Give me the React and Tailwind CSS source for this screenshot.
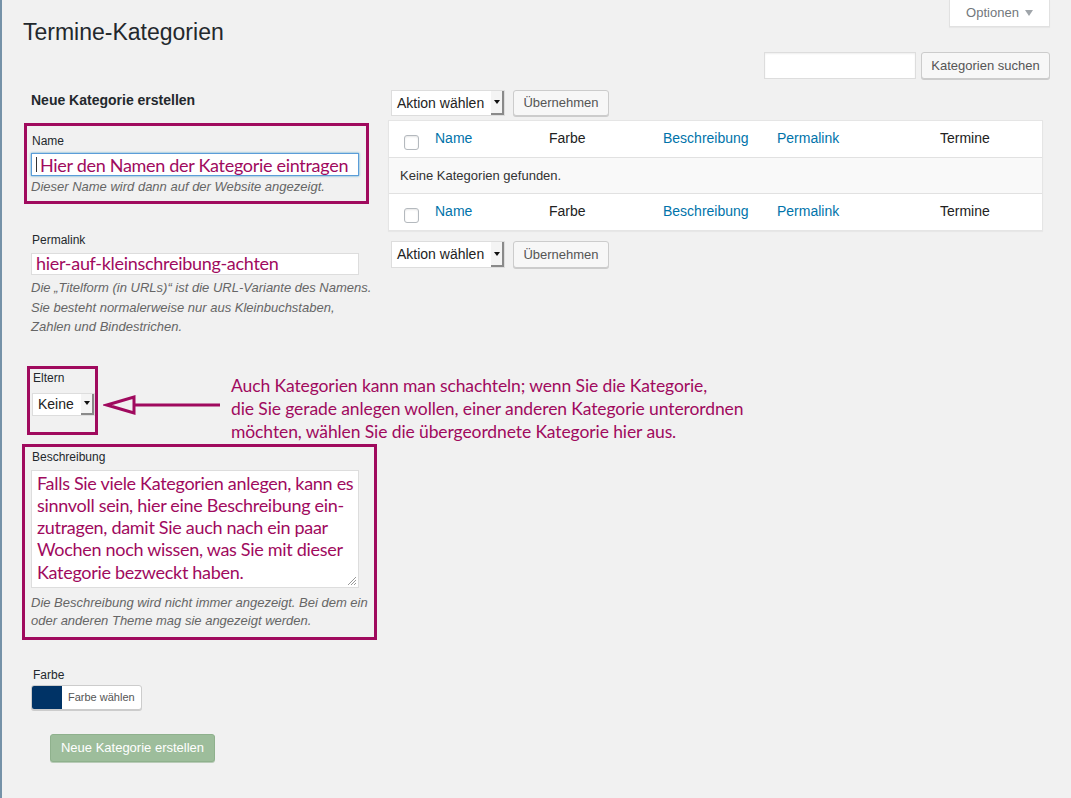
import React from "react";

const anno = { fontFamily: '"Lato", "Open Sans", sans-serif' };
const annoTight = { fontFamily: '"Lato", "Open Sans", sans-serif', letterSpacing: "-0.3px" };

function Select({ label, w, textClass = "" }) {
  return (
    <div className={`flex h-full bg-white border border-[#ddd] ${w}`}>
      <div className={`flex-1 flex items-center pl-[5px] text-[14px] text-[#222] ${textClass}`}>{label}</div>
      <div className="w-[13px] flex items-center justify-center border-r-2 border-b-2 border-[#8a8a8a] bg-[#f4f4f4]">
        <svg width="6" height="4" viewBox="0 0 6 4"><path d="M0 0 L6 0 L3 4 Z" fill="#111" /></svg>
      </div>
    </div>
  );
}

function Btn({ children, w }) {
  return (
    <div className={`h-full ${w} flex items-center justify-center bg-[#f7f7f7] border border-[#cccccc] rounded-[3px] shadow-[0_1px_0_#cccccc] text-[13px] text-[#555]`}>
      {children}
    </div>
  );
}

function Check() {
  return <div className="w-[15px] h-[15px] bg-white border border-[#b4b9be] rounded-[3px] shadow-[inset_0_1px_2px_rgba(0,0,0,0.1)]" />;
}

function HeadRow() {
  return (
    <div className="grid grid-cols-[46px_114px_114px_114px_163px_1fr] h-[36px] items-center text-[14px]">
      <div className="pl-[15px] pt-[6px]"><Check /></div>
      <div className="text-[#0073aa] -mt-[2px]">Name</div>
      <div className="text-[#222] -mt-[2px]">Farbe</div>
      <div className="text-[#0073aa] -mt-[2px]">Beschreibung</div>
      <div className="text-[#0073aa] -mt-[2px]">Permalink</div>
      <div className="text-[#222] -mt-[2px]">Termine</div>
    </div>
  );
}

export default function App() {
  return (
    <div
      className="relative w-[1071px] min-h-[798px] bg-[#f1f1f1] border-l-2 border-[#7592a8]"
      style={{ fontFamily: '"Liberation Sans", Arial, sans-serif' }}
    >
      {/* Optionen tab */}
      <div className="absolute right-[21px] top-0 w-[101px] h-[27px] bg-white border border-t-0 border-[#e1e1e1] shadow-[0_1px_1px_rgba(0,0,0,0.04)] flex items-center justify-center gap-[6px] text-[13px] text-[#72777c]">
        <span>Optionen</span>
        <svg width="8" height="6" viewBox="0 0 8 6"><path d="M0 0 L8 0 L4 6 Z" fill="#a0a5aa" /></svg>
      </div>

      <div className="pl-[21px] pt-[18px] h-[46px] text-[23px] leading-[29px] text-[#23282d]">Termine-Kategorien</div>

      <div className="flex justify-end gap-[5px] pr-[21px] mt-[6px] h-[27px]">
        <div className="w-[152px] h-full bg-white border border-[#ddd] shadow-[inset_0_1px_2px_rgba(0,0,0,0.07)]" />
        <Btn w="w-[129px]">Kategorien suchen</Btn>
      </div>

      <div className="flex pl-[20px]">
        {/* Left column */}
        <div className="w-[356px] flex flex-col shrink-0">
          <div className="mt-[11px] ml-[9px] h-[20px] leading-[20px] text-[14px] font-bold text-[#23282d]">Neue Kategorie erstellen</div>

          {/* Name box */}
          <div className="mt-[13px] ml-[2px] w-[345px] h-[81px] border-[3px] border-[#a00a5e] flex flex-col">
            <div className="mt-[7px] ml-[5px] h-[16px] leading-[16px] text-[12px] text-[#23282d]">Name</div>
            <div className="mt-[4px] ml-[4px] w-[328px] h-[23px] bg-white border border-[#5b9dd9] shadow-[0_0_2px_rgba(30,140,190,0.8)] flex items-center pl-[4px] whitespace-nowrap">
              <span className="inline-block w-[1px] h-[15px] bg-[#333] mr-[3px]" />
              <span className="text-[18px] leading-[20px] text-[#a00a5e]" style={annoTight}>Hier den Namen der Kategorie eintragen</span>
            </div>
            <div className="mt-[2px] ml-[4px] h-[18px] leading-[18px] text-[13px] italic text-[#666]">Dieser Name wird dann auf der Website angezeigt.</div>
          </div>

          {/* Permalink */}
          <div className="mt-[28px] ml-[10px] h-[16px] leading-[16px] text-[12px] text-[#23282d]">Permalink</div>
          <div className="mt-[5px] ml-[9px] w-[328px] h-[22px] bg-white border border-[#ddd] flex items-center pl-[4px] whitespace-nowrap">
            <span className="text-[18px] leading-[18px] text-[#a00a5e] -mt-[2px]" style={annoTight}>hier-auf-kleinschreibung-achten</span>
          </div>
          <div className="mt-[3px] ml-[9px] leading-[19.5px] text-[13px] italic text-[#666]">
            <div>Die „Titelform (in URLs)“ ist die URL-Variante des Namens.</div>
            <div>Sie besteht normalerweise nur aus Kleinbuchstaben,</div>
            <div>Zahlen und Bindestrichen.</div>
          </div>

          {/* Eltern row */}
          <div className="mt-[29px] ml-[5px] h-[69px] flex items-start">
            <div className="w-[71px] h-[69px] shrink-0 border-[3px] border-[#a00a5e] flex flex-col">
              <div className="mt-[1px] ml-[3px] h-[16px] leading-[16px] text-[12px] text-[#23282d]">Eltern</div>
              <div className="mt-[7px] ml-[2px] h-[23px]">
                <Select label="Keine" w="w-[63px]" />
              </div>
            </div>
            <svg className="mt-[28px] ml-[5px] shrink-0" width="120" height="22" viewBox="0 0 120 22">
              <path d="M4 11 L31 3 L31 19 Z" fill="none" stroke="#a00a5e" strokeWidth="3" strokeLinejoin="miter" />
              <path d="M32 11 L117 11" stroke="#a00a5e" strokeWidth="3" />
            </svg>
            <div className="mt-[8px] ml-[8px] whitespace-nowrap text-[17.5px] leading-[23px] text-[#a00a5e]" style={{ ...anno, letterSpacing: "-0.1px" }}>
              <div>Auch Kategorien kann man schachteln; wenn Sie die Kategorie,</div>
              <div>die Sie gerade anlegen wollen, einer anderen Kategorie unterordnen</div>
              <div>möchten, wählen Sie die übergeordnete Kategorie hier aus.</div>
            </div>
          </div>

          {/* Beschreibung box */}
          <div className="mt-[9px] w-[355px] h-[196px] border-[3px] border-[#a00a5e] flex flex-col">
            <div className="mt-[2px] ml-[7px] h-[16px] leading-[16px] text-[12px] text-[#23282d]">Beschreibung</div>
            <div className="relative mt-[5px] ml-[6px] w-[328px] h-[118px] bg-white border border-[#ddd] pl-[5px] pt-[1px] overflow-hidden">
              <div className="whitespace-nowrap text-[18px] leading-[22.3px] text-[#a00a5e]" style={annoTight}>
                <div>Falls Sie viele Kategorien anlegen, kann es</div>
                <div>sinnvoll sein, hier eine Beschreibung ein-</div>
                <div>zutragen, damit Sie auch nach ein paar</div>
                <div>Wochen noch wissen, was Sie mit dieser</div>
                <div>Kategorie bezweckt haben.</div>
              </div>
              <svg className="absolute right-[1px] bottom-[1px]" width="10" height="10" viewBox="0 0 10 10">
                <path d="M9 1 L1 9 M9 4 L4 9 M9 7 L7 9" stroke="#999" strokeWidth="1" />
              </svg>
            </div>
            <div className="mt-[6px] ml-[6px] leading-[18px] text-[13px] italic text-[#666]">
              <div>Die Beschreibung wird nicht immer angezeigt. Bei dem ein</div>
              <div>oder anderen Theme mag sie angezeigt werden.</div>
            </div>
          </div>

          {/* Farbe */}
          <div className="mt-[27px] ml-[11px] h-[16px] leading-[16px] text-[12px] text-[#23282d]">Farbe</div>
          <div className="mt-[2px] ml-[9px] w-[111px] h-[25px] flex bg-white border border-[#ccc] rounded-[3px] shadow-[0_1px_0_#ccc] overflow-hidden">
            <div className="w-[30px] h-full bg-[#003366]" />
            <div className="flex-1 flex items-center pl-[6px] text-[11px] text-[#555]">Farbe wählen</div>
          </div>

          <div className="mt-[24px] ml-[28px] w-[165px] h-[28px] flex items-center justify-center bg-[#9dbd9b] border border-[#8fb18d] rounded-[3px] shadow-[0_1px_0_#b8cbb7] text-[13px] text-white">
            Neue Kategorie erstellen
          </div>
        </div>

        {/* Right column */}
        <div className="ml-[10px] w-[655px] flex flex-col">
          <div className="mt-[11px] flex h-[26px]">
            <div className="ml-[3px] h-full"><Select label="Aktion wählen" w="w-[114px]" /></div>
            <div className="ml-[8px] h-full"><Btn w="w-[96px]">Übernehmen</Btn></div>
          </div>

          <div className="mt-[4px] bg-white border border-[#e5e5e5] shadow-[0_1px_1px_rgba(0,0,0,0.04)]">
            <HeadRow />
            <div className="h-[37px] flex items-center border-t border-b border-[#e1e1e1] bg-[#f9f9f9] pl-[11px] text-[13px] text-[#333]">
              Keine Kategorien gefunden.
            </div>
            <HeadRow />
          </div>

          <div className="mt-[10px] flex h-[27px]">
            <div className="ml-[3px] h-full"><Select label="Aktion wählen" w="w-[114px]" /></div>
            <div className="ml-[8px] h-full"><Btn w="w-[96px]">Übernehmen</Btn></div>
          </div>
        </div>
      </div>
    </div>
  );
}
